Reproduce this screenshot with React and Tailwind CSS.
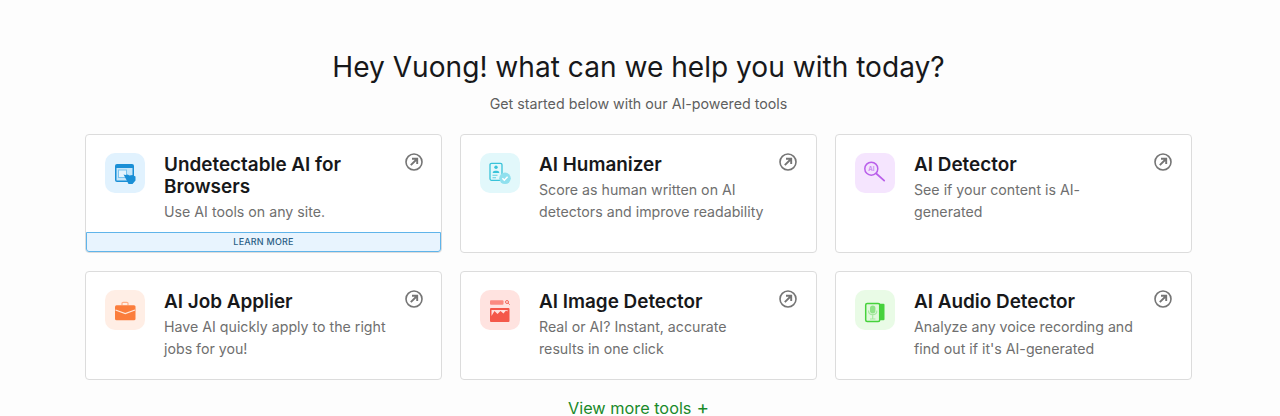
const FONT = "font-['Inter','Noto_Sans',sans-serif]"

const IconBrowser = () => (
  <svg width="24" height="24" viewBox="0 0 24 24">
    <rect x="2" y="3" width="19" height="18" rx="2" fill="#1a8fd6" />
    <rect x="3.500" y="7" width="16" height="12.500" fill="#c5e6fa" />
    <rect x="5.500" y="9" width="8" height="7.500" fill="#e6f4fd" stroke="#7cc4ee" strokeWidth="1" />
    <path d="M10.500 13.500l2 .5 2-.5 2 1 3-.5 3 1.500v4l-3 3.500h-4l-2-4z" fill="#1a8fd6" />
  </svg>
)

const IconHumanizer = () => (
  <svg width="26" height="26" viewBox="0 0 26 26">
    <rect x="3" y="3.300" width="12" height="17" rx="1.500" fill="#e2f8fb" stroke="#39c3d9" strokeWidth="1.300" />
    <circle cx="9" cy="7.200" r="1.700" fill="#39c3d9" />
    <path d="M5.800 12.200c0-2 6.400-2 6.400 0v.8H5.800z" fill="#39c3d9" />
    <path d="M5.500 15.200h5M5.500 17.800h3.500" stroke="#5fd0e2" strokeWidth="1.100" />
    <circle cx="18" cy="18.300" r="5.800" fill="#8fe0ee" />
    <path d="M15.400 18.300l1.900 1.900 3.300-3.400" fill="none" stroke="#fff" strokeWidth="1.500" />
  </svg>
)

const IconDetector = () => (
  <svg width="26" height="26" viewBox="0 0 26 26">
    <circle cx="9.300" cy="8.700" r="6.500" fill="#f3e3fd" stroke="#b95fea" strokeWidth="1.500" />
    <path d="M14.200 13.500l8 7.200" stroke="#b95fea" strokeWidth="1.700" strokeLinecap="round" />
    <text x="9.300" y="10.800" textAnchor="middle" fontSize="6" fontWeight="700" fill="#c98af0" fontFamily="Inter, sans-serif">AI</text>
  </svg>
)

const IconBriefcase = () => (
  <svg width="24" height="24" viewBox="0 0 24 24">
    <path d="M9 7.300V5.500A1.200 1.200 0 0 1 10.200 4.300h3.600A1.200 1.200 0 0 1 15 5.500v1.800" fill="none" stroke="#ffb08a" strokeWidth="1.200" />
    <rect x="2" y="7.300" width="20.500" height="15" rx="1.500" fill="#fb7d3c" />
    <path d="M2.500 12l9.750 3.500L22 12" fill="none" stroke="#ffe9dd" strokeWidth="1.200" />
  </svg>
)

const IconImage = () => (
  <svg width="26" height="26" viewBox="0 0 26 26">
    <rect x="3" y="3.300" width="13.500" height="4.400" rx="1" fill="#fb8a80" />
    <circle cx="20" cy="5" r="1.500" fill="none" stroke="#f4685c" strokeWidth="1" />
    <path d="M21.200 6.200l1.500 1.500" stroke="#f4685c" strokeWidth="1" />
    <rect x="3" y="11" width="19.500" height="14" rx="1" fill="#f4584a" />
    <path d="M4.500 19l3-5 3 3 3-3 3 2.500 2.500-3 1.500 1v-1.500H4.500z" fill="#ffe2df" />
  </svg>
)

const IconAudio = () => (
  <svg width="26" height="26" viewBox="0 0 26 26">
    <rect x="17" y="6.700" width="5.500" height="16.600" rx="1" fill="#46d23c" />
    <rect x="3.700" y="6.400" width="14" height="18" rx="1.500" fill="#e0f9dc" stroke="#46d23c" strokeWidth="1.500" />
    <rect x="8" y="8.500" width="5.400" height="8" rx="2.700" fill="#8fe388" />
    <path d="M6.500 13.500c0 5.500 8.400 5.500 8.400 0M10.700 17.500v4M8 22h5.400" fill="none" stroke="#a5e8a0" strokeWidth="1.100" />
  </svg>
)

const ArrowCircle = () => (
  <svg width="18" height="18" viewBox="0 0 18 18" fill="none" stroke="#757575" className="flex-shrink-0">
    <circle cx="9" cy="9" r="8" strokeWidth="1.600" />
    <path d="M5.800 12.200L12 6M7 5.800h5.200V11" strokeWidth="1.900" />
  </svg>
)

const TOOLS = [
  { title: 'Undetectable AI for Browsers', desc: 'Use AI tools on any site.', icon: <IconBrowser />, tint: 'bg-[#e1f2fe]', learn: true },
  { title: 'AI Humanizer', desc: 'Score as human written on AI detectors and improve readability', icon: <IconHumanizer />, tint: 'bg-[#e2f8fb]' },
  { title: 'AI Detector', desc: "See if your content is AI-generated", icon: <IconDetector />, tint: 'bg-[#f5e5fe]' },
  { title: 'AI Job Applier', desc: 'Have AI quickly apply to the right jobs for you!', icon: <IconBriefcase />, tint: 'bg-[#ffeee5]' },
  { title: 'AI Image Detector', desc: 'Real or AI? Instant, accurate results in one click', icon: <IconImage />, tint: 'bg-[#ffe3e0]' },
  { title: 'AI Audio Detector', desc: "Analyze any voice recording and find out if it's AI-generated", icon: <IconAudio />, tint: 'bg-[#e9fbe6]' },
]

function ToolCard({ tool, index }) {
  return (
    <div className="flex flex-col bg-white border border-[#dcdcdc] rounded-[4px]">
      <div className={`flex-1 flex items-start pl-[19px] pt-[18px] ${index % 3 === 0 ? 'pr-[18px]' : 'pr-[19px]'} ${tool.learn ? 'pb-[9px]' : 'pb-[19px]'}`}>
        <div className={`w-10 h-10 flex-shrink-0 rounded-[10px] flex items-center justify-center ${tool.tint}`}>
          {tool.icon}
        </div>
        <div className="flex-1 min-w-0 pl-[19px] pr-[8px] pt-px">
          <h3 className="text-[18.900px] leading-[22px] font-[570] text-[#17181a]">{tool.title}</h3>
          <p className="mt-[3px] text-[14.200px] leading-[22px] text-[#6f6f6f]">{tool.desc}</p>
        </div>
        <ArrowCircle />
      </div>
      {tool.learn && (
        <div className="h-[20px] flex items-center justify-center bg-[#e8f4fe] border border-[#5fb4ea] rounded-b-[3px] text-[9px] font-medium tracking-[0.2px] text-[#2b5f86]">
          LEARN MORE
        </div>
      )}
    </div>
  )
}

export default function App() {
  return (
    <div className={`h-[416px] overflow-hidden bg-[#fdfdfd] ${FONT}`}>
      <div className="w-[1107px] ml-[85px] pt-[48px] flex flex-col items-center">
        <h1 className="text-[28.100px] leading-[38px] font-normal text-[#17181a]">Hey Vuong! what can we help you with today?</h1>
        <p className="mt-[7px] text-[14.250px] leading-[22px] text-[#5f5f5f]">Get started below with our AI-powered tools</p>
        <div className="mt-[19px] w-full grid grid-cols-3 gap-[18px]">
          {TOOLS.map((tool, i) => (
            <ToolCard key={tool.title} tool={tool} index={i} />
          ))}
        </div>
        <div className="mt-[20px] flex items-center h-[16px] gap-[5px] text-[16.300px] leading-[16px] text-[#1a8a2a]">
          <span>View more tools</span>
          <span className="text-[19px] leading-[16px]">+</span>
        </div>
      </div>
    </div>
  )
}
